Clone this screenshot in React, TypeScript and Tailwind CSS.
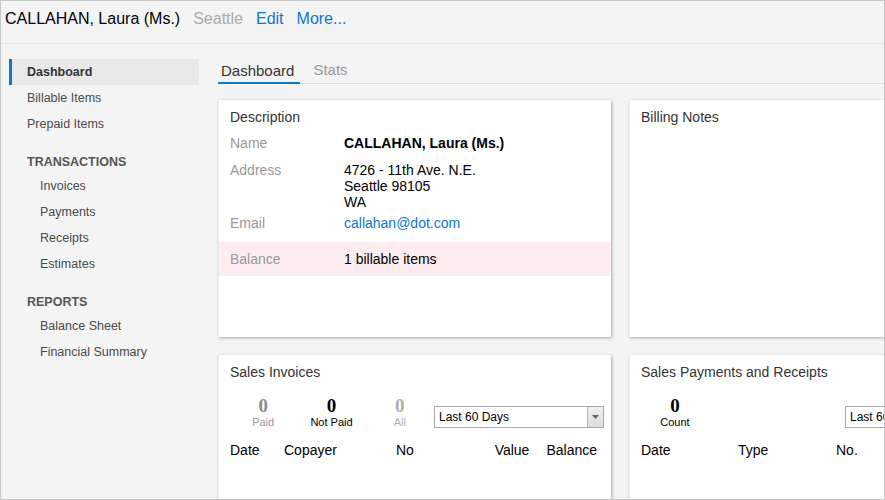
import React from 'react';

const font = { fontFamily: '"Liberation Sans", Arial, sans-serif' };

function SideItem({ label, active, indent }: { label: string; active?: boolean; indent?: boolean }) {
  return (
    <div
      className={
        'h-[26px] flex items-center border-l-[3px] ' +
        (active ? 'border-[#0a7ad6] bg-[#e9e9e9] font-bold text-[#333]' : 'border-transparent text-[#4a4a4a]') +
        (indent ? ' pl-[28px]' : ' pl-[15px]')
      }
    >
      {label}
    </div>
  );
}

function SideHeading({ label }: { label: string }) {
  return (
    <div className="mt-[14px] h-[22px] flex items-center pl-[18px] font-bold text-[#555]">{label}</div>
  );
}

function Select() {
  return (
    <div className="mt-[9px] mr-[7px] w-[170px] h-[22px] shrink-0 flex border border-[#a9a9a9] bg-white">
      <div className="flex-1 pl-[4px] text-[12px] leading-[20px] text-black whitespace-nowrap overflow-hidden">Last 60 Days</div>
      <div className="w-[16px] border-l border-[#b5b5b5] bg-gradient-to-b from-[#f0f0f0] to-[#dcdcdc] flex items-center justify-center">
        <svg width="7" height="4" viewBox="0 0 7 4">
          <path d="M0 0 L7 0 L3.5 4 Z" fill="#666" />
        </svg>
      </div>
    </div>
  );
}

function Stat({ value, label, tone }: { value: string; label: string; tone: 'dark' | 'mid' | 'light' }) {
  const digit = tone === 'dark' ? 'text-black' : tone === 'mid' ? 'text-[#8c8c8c]' : 'text-[#b0b0b0]';
  const text = tone === 'dark' ? 'text-black' : tone === 'mid' ? 'text-[#999]' : 'text-[#b0b0b0]';
  return (
    <div className="w-[70px] text-center">
      <div className={'text-[19px] leading-[18px] font-bold ' + digit} style={{ fontFamily: '"Liberation Serif", "Times New Roman", serif' }}>
        {value}
      </div>
      <div className={'text-[11px] leading-[14px] ' + text}>{label}</div>
    </div>
  );
}

function Card({ children }: { children: React.ReactNode }) {
  return (
    <div className="h-[237px] bg-white shadow-[1px_1px_3px_rgba(0,0,0,0.3)] border-l border-[#ececec] overflow-hidden">
      {children}
    </div>
  );
}

function CardTitle({ title }: { title: string }) {
  return <div className="pt-[8px] pl-[11px] text-[14px] leading-[18px] text-[#333]">{title}</div>;
}

export default function App() {
  return (
    <div className="w-[885px] h-[500px] border border-[#c8c8c8] bg-[#f4f4f4] overflow-hidden flex flex-col" style={font}>
      <div className="h-[43px] shrink-0 border-b border-[#e4e4e4] flex items-start pt-[8px] pl-[4px] text-[16px] leading-[20px] gap-[13px] whitespace-nowrap">
        <span className="text-black">CALLAHAN, Laura (Ms.)</span>
        <span className="text-[#aaa]">Seattle</span>
        <span className="text-[#0b78d1]">Edit</span>
        <span className="text-[#0b78d1]">More...</span>
      </div>

      <div className="flex flex-1 min-h-0">
        <div className="w-[217px] shrink-0 pl-[8px] pt-[15px] text-[12.5px]">
          <div className="w-[190px]">
            <SideItem label="Dashboard" active />
            <SideItem label="Billable Items" />
            <SideItem label="Prepaid Items" />
            <SideHeading label="TRANSACTIONS" />
            <SideItem label="Invoices" indent />
            <SideItem label="Payments" indent />
            <SideItem label="Receipts" indent />
            <SideItem label="Estimates" indent />
            <SideHeading label="REPORTS" />
            <SideItem label="Balance Sheet" indent />
            <SideItem label="Financial Summary" indent />
          </div>
        </div>

        <div className="flex-1 min-w-0 pt-[15px]">
          <div className="flex items-end h-[25px] border-b border-[#dcdcdc] text-[15px] leading-[20px]">
            <div className="h-[25px] pt-[2px] pl-[3px] pr-[6px] border-b-2 border-[#0a7ad6] -mb-[1px] text-[#333]">Dashboard</div>
            <div className="h-[25px] pt-[2px] pl-[13px] text-[#999]">Stats</div>
          </div>

          <div className="mt-[16px] grid grid-cols-[393px_393px] gap-[18px] text-[14px]">
            <Card>
              <CardTitle title="Description" />
              <div className="mt-[9px] flex pl-[11px] leading-[16px]">
                <div className="w-[114px] text-[#999]">Name</div>
                <div className="font-bold text-black">CALLAHAN, Laura (Ms.)</div>
              </div>
              <div className="mt-[11px] flex pl-[11px] leading-[16px]">
                <div className="w-[114px] text-[#999]">Address</div>
                <div className="text-black">
                  <div>4726 - 11th Ave. N.E.</div>
                  <div>Seattle 98105</div>
                  <div>WA</div>
                </div>
              </div>
              <div className="mt-[5px] flex pl-[11px] leading-[16px]">
                <div className="w-[114px] text-[#999]">Email</div>
                <div className="text-[#0b78d1]">callahan@dot.com</div>
              </div>
              <div className="mt-[11px] h-[34px] flex items-center pl-[11px] bg-[#fdedf1] leading-[16px]">
                <div className="w-[114px] text-[#999]">Balance</div>
                <div className="text-black">1 billable items</div>
              </div>
            </Card>

            <Card>
              <CardTitle title="Billing Notes" />
            </Card>

            <Card>
              <CardTitle title="Sales Invoices" />
              <div className="mt-[16px] flex items-start pl-[10px]">
                <Stat value="0" label="Paid" tone="mid" />
                <Stat value="0" label="Not Paid" tone="dark" />
                <Stat value="0" label="All" tone="light" />
                <div className="flex-1" />
                <Select />
              </div>
              <div className="mt-[13px] flex pl-[11px] pr-[14px] leading-[16px] text-black">
                <div className="w-[54px]">Date</div>
                <div className="w-[112px]">Copayer</div>
                <div className="flex-1">No</div>
                <div>Value</div>
                <div className="ml-[17px]">Balance</div>
              </div>
            </Card>

            <Card>
              <CardTitle title="Sales Payments and Receipts" />
              <div className="mt-[16px] flex items-start pl-[10px]">
                <Stat value="0" label="Count" tone="dark" />
                <div className="flex-1" />
                <Select />
              </div>
              <div className="mt-[13px] flex pl-[11px] pr-[14px] leading-[16px] text-black">
                <div className="w-[97px]">Date</div>
                <div className="w-[98px]">Type</div>
                <div className="flex-1">No.</div>
              </div>
            </Card>
          </div>
        </div>
      </div>
    </div>
  );
}
